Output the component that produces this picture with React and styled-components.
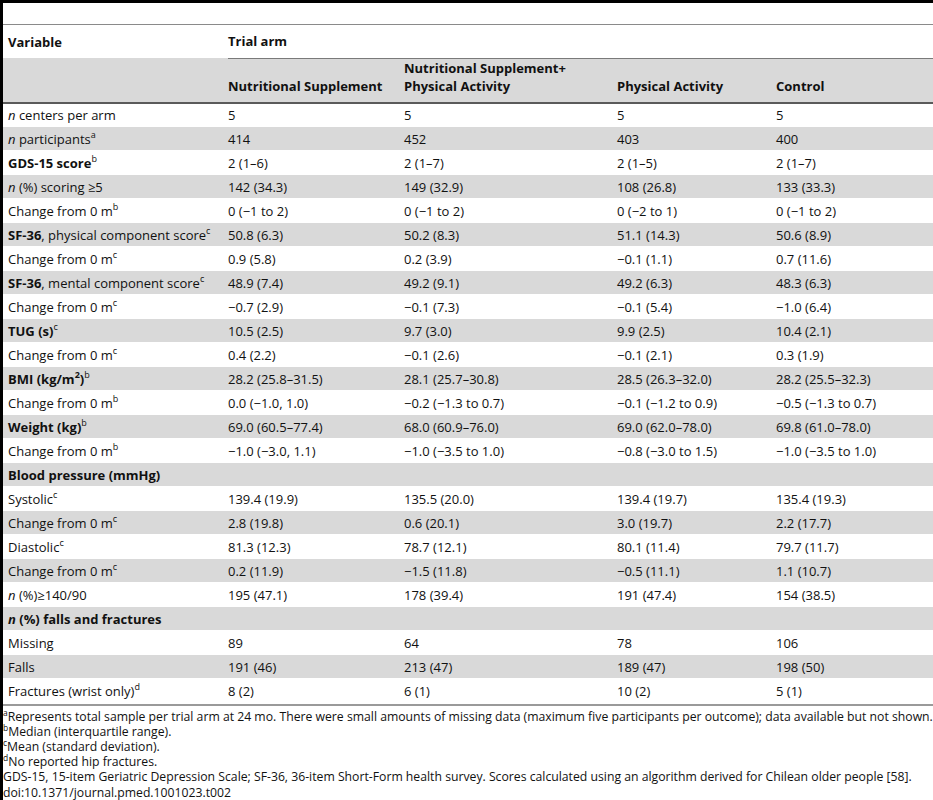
import styled, { createGlobalStyle } from 'styled-components';

const GlobalStyle = createGlobalStyle`
  html, body {
    margin: 0;
    padding: 0;
    background: #ffffff;
  }
  body {
    font-family: "Open Sans", "Liberation Sans", sans-serif;
    color: #111;
  }
`;

const Frame = styled.div`
  border-left: 3px solid #000;
  border-top: 3px solid #000;
  min-height: 797px;
  box-sizing: border-box;
  width: 933px;
  overflow: hidden;
`;

const TopGap = styled.div`
  height: 21px;
  border-bottom: 1px solid #8a8a8a;
`;

const Table = styled.table`
  width: 930px;
  table-layout: fixed;
  border-collapse: collapse;
  border-spacing: 0;
  font-size: 13px;
  border-bottom: 2px solid #9a9a9a;
`;

const HeadRow = styled.tr`
  height: ${(p) => p.$h}px;
  background: ${(p) => (p.$shaded ? '#d9d9d9' : '#ffffff')};
`;

const Th = styled.th`
  text-align: left;
  font-weight: 700;
  padding: 0 8px 0 ${(p) => (p.$first ? 5 : 0)}px;
  vertical-align: ${(p) => p.$valign || 'middle'};
  padding-bottom: ${(p) => (p.$valign === 'bottom' ? 7 : 0)}px;
  line-height: 18px;
  white-space: nowrap;
  border-top: ${(p) => (p.$rule ? '1px solid #7a7a7a' : 'none')};
  border-bottom: ${(p) => (p.$dark ? '2px solid #5a5a5a' : 'none')};
`;

const Body = styled.tbody`
  & > tr:nth-child(even) {
    background: #d9d9d9;
  }
  & > tr:last-child {
    height: 26px;
  }
`;

const Row = styled.tr`
  height: 24px;
  border-top: 1px solid #ffffff;
`;

const Td = styled.td`
  padding: 0 6px 0 ${(p) => (p.$first ? 5 : 0)}px;
  white-space: nowrap;
  vertical-align: middle;
  line-height: 18px;
`;

const Sup = styled.sup`
  font-size: 9px;
  line-height: 0;
  vertical-align: 6px;
`;

const Notes = styled.div`
  padding: 3px 0 0 0;
  font-size: 13px;
  line-height: 15.2px;
  transform: scaleX(0.94);
  transform-origin: left top;
  width: 1100px;
`;

const NoteLine = styled.div`
  white-space: nowrap;
`;

const NoteSup = styled.sup`
  font-size: 9px;
  line-height: 0;
  vertical-align: 5px;
`;

const rows = [
  { label: <><i>n</i> centers per arm</>, v: ['5', '5', '5', '5'] },
  { label: <><i>n</i> participants<Sup>a</Sup></>, v: ['414', '452', '403', '400'] },
  { label: <><b>GDS-15 score</b><Sup>b</Sup></>, v: ['2 (1–6)', '2 (1–7)', '2 (1–5)', '2 (1–7)'] },
  { label: <><i>n</i> (%) scoring ≥5</>, v: ['142 (34.3)', '149 (32.9)', '108 (26.8)', '133 (33.3)'] },
  { label: <>Change from 0 m<Sup>b</Sup></>, v: ['0 (−1 to 2)', '0 (−1 to 2)', '0 (−2 to 1)', '0 (−1 to 2)'] },
  { label: <><b>SF-36</b>, physical component score<Sup>c</Sup></>, v: ['50.8 (6.3)', '50.2 (8.3)', '51.1 (14.3)', '50.6 (8.9)'] },
  { label: <>Change from 0 m<Sup>c</Sup></>, v: ['0.9 (5.8)', '0.2 (3.9)', '−0.1 (1.1)', '0.7 (11.6)'] },
  { label: <><b>SF-36</b>, mental component score<Sup>c</Sup></>, v: ['48.9 (7.4)', '49.2 (9.1)', '49.2 (6.3)', '48.3 (6.3)'] },
  { label: <>Change from 0 m<Sup>c</Sup></>, v: ['−0.7 (2.9)', '−0.1 (7.3)', '−0.1 (5.4)', '−1.0 (6.4)'] },
  { label: <><b>TUG (s)</b><Sup>c</Sup></>, v: ['10.5 (2.5)', '9.7 (3.0)', '9.9 (2.5)', '10.4 (2.1)'] },
  { label: <>Change from 0 m<Sup>c</Sup></>, v: ['0.4 (2.2)', '−0.1 (2.6)', '−0.1 (2.1)', '0.3 (1.9)'] },
  { label: <><b>BMI (kg/m<Sup>2</Sup>)</b><Sup>b</Sup></>, v: ['28.2 (25.8–31.5)', '28.1 (25.7–30.8)', '28.5 (26.3–32.0)', '28.2 (25.5–32.3)'] },
  { label: <>Change from 0 m<Sup>b</Sup></>, v: ['0.0 (−1.0, 1.0)', '−0.2 (−1.3 to 0.7)', '−0.1 (−1.2 to 0.9)', '−0.5 (−1.3 to 0.7)'] },
  { label: <><b>Weight (kg)</b><Sup>b</Sup></>, v: ['69.0 (60.5–77.4)', '68.0 (60.9–76.0)', '69.0 (62.0–78.0)', '69.8 (61.0–78.0)'] },
  { label: <>Change from 0 m<Sup>b</Sup></>, v: ['−1.0 (−3.0, 1.1)', '−1.0 (−3.5 to 1.0)', '−0.8 (−3.0 to 1.5)', '−1.0 (−3.5 to 1.0)'] },
  { label: <b>Blood pressure (mmHg)</b>, section: true },
  { label: <>Systolic<Sup>c</Sup></>, v: ['139.4 (19.9)', '135.5 (20.0)', '139.4 (19.7)', '135.4 (19.3)'] },
  { label: <>Change from 0 m<Sup>c</Sup></>, v: ['2.8 (19.8)', '0.6 (20.1)', '3.0 (19.7)', '2.2 (17.7)'] },
  { label: <>Diastolic<Sup>c</Sup></>, v: ['81.3 (12.3)', '78.7 (12.1)', '80.1 (11.4)', '79.7 (11.7)'] },
  { label: <>Change from 0 m<Sup>c</Sup></>, v: ['0.2 (11.9)', '−1.5 (11.8)', '−0.5 (11.1)', '1.1 (10.7)'] },
  { label: <><i>n</i> (%)≥140/90</>, v: ['195 (47.1)', '178 (39.4)', '191 (47.4)', '154 (38.5)'] },
  { label: <b><i>n</i> (%) falls and fractures</b>, section: true },
  { label: <>Missing</>, v: ['89', '64', '78', '106'] },
  { label: <>Falls</>, v: ['191 (46)', '213 (47)', '189 (47)', '198 (50)'] },
  { label: <>Fractures (wrist only)<Sup>d</Sup></>, v: ['8 (2)', '6 (1)', '10 (2)', '5 (1)'] },
];

const arms = [
  'Nutritional Supplement',
  <>Nutritional Supplement+<br />Physical Activity</>,
  'Physical Activity',
  'Control',
];

export default function App() {
  return (
    <>
      <GlobalStyle />
      <Frame>
        <TopGap />
        <Table>
          <colgroup>
            <col style={{ width: 225 }} />
            <col style={{ width: 176 }} />
            <col style={{ width: 213 }} />
            <col style={{ width: 159 }} />
            <col style={{ width: 157 }} />
          </colgroup>
          <thead>
            <HeadRow $h={33}>
              <Th $first>Variable</Th>
              <Th colSpan={4}>Trial arm</Th>
            </HeadRow>
            <HeadRow $h={44} $shaded>
              <Th $first $dark />
              {arms.map((a, i) => (
                <Th key={i} $rule $dark $valign="bottom">{a}</Th>
              ))}
            </HeadRow>
          </thead>
          <Body>
            {rows.map((r, i) => (
              <Row key={i}>
                {r.section ? (
                  <Td $first colSpan={5}>{r.label}</Td>
                ) : (
                  <>
                    <Td $first>{r.label}</Td>
                    {r.v.map((x, j) => (
                      <Td key={j}>{x}</Td>
                    ))}
                  </>
                )}
              </Row>
            ))}
          </Body>
        </Table>
        <Notes>
          <NoteLine><NoteSup>a</NoteSup>Represents total sample per trial arm at 24 mo. There were small amounts of missing data (maximum five participants per outcome); data available but not shown.</NoteLine>
          <NoteLine><NoteSup>b</NoteSup>Median (interquartile range).</NoteLine>
          <NoteLine><NoteSup>c</NoteSup>Mean (standard deviation).</NoteLine>
          <NoteLine><NoteSup>d</NoteSup>No reported hip fractures.</NoteLine>
          <NoteLine>GDS-15, 15-item Geriatric Depression Scale; SF-36, 36-item Short-Form health survey. Scores calculated using an algorithm derived for Chilean older people [58].</NoteLine>
          <NoteLine>doi:10.1371/journal.pmed.1001023.t002</NoteLine>
        </Notes>
      </Frame>
    </>
  );
}
